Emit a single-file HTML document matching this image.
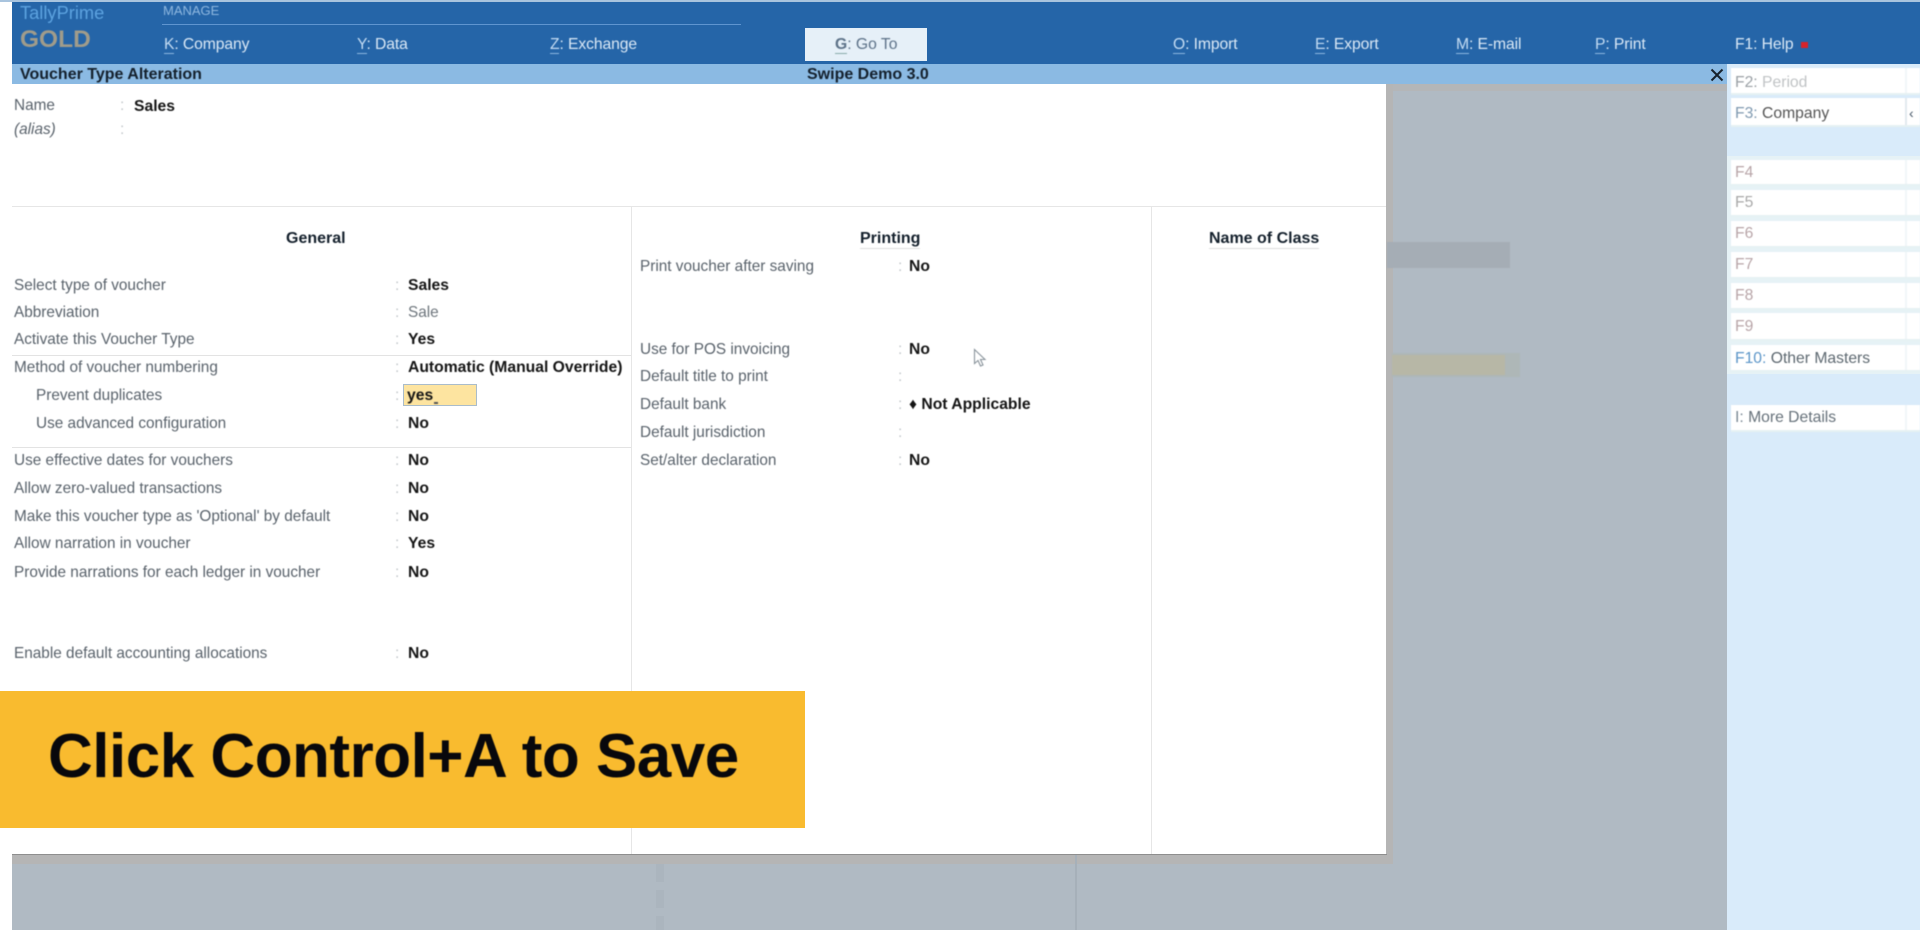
<!DOCTYPE html>
<html><head><meta charset="utf-8">
<style>
html,body{margin:0;padding:0;width:1920px;height:930px;overflow:hidden;background:#fff}
body{position:relative;font-family:"Liberation Sans",Arial,sans-serif;font-size:15.35px}
div,span.a{position:absolute;white-space:nowrap}
.t{filter:blur(.5px)}
.l{color:#59626b;line-height:18px}
.v{color:#151515;font-weight:bold;line-height:18px;font-size:15.7px}
.c{color:#c2c7ca;line-height:18px}
.m{font-weight:bold;color:#14202c;line-height:18px;font-size:16px}
.h{color:#dbe9f6;line-height:18px;font-size:15.7px;letter-spacing:-.1px}
.h u{text-decoration:none;border-bottom:1px solid #8fb8e0;color:#c4dcf3}
.s{left:1731px;width:189px;background:#fff;border-bottom:2px solid #e6f1f3;box-sizing:border-box;font-size:15.7px}
.s i{position:absolute;left:174px;top:0;bottom:0;width:2px;background:#f1f6f8}
.s span{position:absolute;left:4px;top:5px;line-height:18px;color:#8d9297}
.hr{background:#e3e3e3;height:1px}
</style></head><body>
<!-- backgrounds -->
<div style="left:12px;top:84px;width:1715px;height:846px;background:#b0bac3"></div>
<div style="left:1727px;top:64px;width:193px;height:866px;background:#d9ebfa"></div>
<div style="left:1727px;top:156px;width:193px;height:218px;background:#e6f2f6"></div>
<div style="left:0;top:0;width:1920px;height:2px;background:#a9c4de"></div>
<div style="left:12px;top:2px;width:1908px;height:62px;background:#2565a8"></div>
<div style="left:12px;top:64px;width:1715px;height:20px;background:#8bbae3"></div>
<div style="left:1386px;top:84px;width:341px;height:7px;background:#b4b6b8"></div>
<div style="left:12px;top:855px;width:1380px;height:9px;background:#b5b5b5"></div>
<div style="left:1386px;top:84px;width:7px;height:780px;background:#b5b5b5"></div>
<div class="t" style="left:1387px;top:242px;width:123px;height:26px;background:#a5adb5"></div>
<div class="t" style="left:1392px;top:353px;width:128px;height:24px;background:#aeb7b7"></div>
<div class="t" style="left:1392px;top:355px;width:113px;height:20px;background:#b7b7a6"></div>
<div style="left:656px;top:864px;width:8px;height:66px;background:repeating-linear-gradient(#abb5be 0 18px,#b0bac3 18px 26px)"></div>
<div style="left:1075px;top:855px;width:2px;height:75px;background:#a6b0b9"></div>

<!-- header -->
<div class="t" style="left:20px;top:4px;color:#5da3e0;font-size:18.3px;line-height:18px">TallyPrime</div>
<div class="t" style="left:20px;top:27px;color:#a09c8b;font-size:24.5px;font-weight:bold;line-height:26px">GOLD</div>
<div class="t" style="left:163px;top:4px;color:#8fb8e0;font-size:13px;line-height:14px">MANAGE</div>
<div style="left:162px;top:24px;width:579px;height:1px;background:#5f95d0"></div>
<div class="t h" style="left:164px;top:36px"><u>K</u>: Company</div>
<div class="t h" style="left:357px;top:36px"><u>Y</u>: Data</div>
<div class="t h" style="left:550px;top:36px"><u>Z</u>: Exchange</div>
<div style="left:805px;top:28px;width:122px;height:33px;background:#e6f0f8"></div>
<div class="t" style="left:835px;top:36px;line-height:18px;font-size:15.7px;color:#5d7288"><u style="text-decoration:none;border-bottom:1px solid #8aa;font-weight:bold">G</u>: Go To</div>
<div class="t h" style="left:1173px;top:36px"><u>O</u>: Import</div>
<div class="t h" style="left:1315px;top:36px"><u>E</u>: Export</div>
<div class="t h" style="left:1456px;top:36px"><u>M</u>: E-mail</div>
<div class="t h" style="left:1595px;top:36px"><u>P</u>: Print</div>
<div class="t h" style="left:1735px;top:36px;color:#dbe9f6">F1: Help</div>
<div class="t" style="left:1801px;top:42px;width:7px;height:6px;background:#d8232a"></div>

<!-- title -->
<div class="t m" style="left:20px;top:66px">Voucher Type Alteration</div>
<div class="t m" style="left:807px;top:66px">Swipe Demo 3.0</div>
<svg style="position:absolute;left:1710px;top:68px" width="14" height="14"><path d="M1.5 1.5L12.5 12.5M12.5 1.5L1.5 12.5" stroke="#17222c" stroke-width="2" fill="none"/></svg>

<!-- dialog -->
<div style="left:12px;top:84px;width:1374px;height:770px;background:#fff"></div>
<div style="left:12px;top:854px;width:1375px;height:1px;background:#8e8e8e"></div>
<div style="left:12px;top:206px;width:1374px;height:1px;background:#e6e6e6"></div>
<div style="left:631px;top:207px;width:1px;height:647px;background:#e6e6e6"></div>
<div style="left:1151px;top:207px;width:1px;height:647px;background:#e6e6e6"></div>
<div class="hr" style="left:12px;top:355px;width:619px"></div>
<div class="hr" style="left:12px;top:447px;width:619px"></div>

<div class="t l" style="left:14px;top:97px">Name</div><div class="t c" style="left:120px;top:97px">:</div><div class="t v" style="left:134px;top:98px">Sales</div>
<div class="t l" style="left:14px;top:121px;font-style:italic">(alias)</div><div class="t c" style="left:120px;top:121px">:</div>

<div class="t m" style="left:286px;top:230px">General</div>
<div class="t m" style="left:860px;top:230px;border-bottom:1px solid #ddd">Printing</div>
<div class="t m" style="left:1209px;top:230px;border-bottom:1px solid #ddd">Name of Class</div>

<div class="t l" style="left:14px;top:277px">Select type of voucher</div><div class="t c" style="left:395px;top:277px">:</div><div class="t v" style="left:408px;top:277px">Sales</div>
<div class="t l" style="left:14px;top:304px">Abbreviation</div><div class="t c" style="left:395px;top:304px">:</div><div class="t l" style="left:408px;top:304px;color:#6d757c">Sale</div>
<div class="t l" style="left:14px;top:331px">Activate this Voucher Type</div><div class="t c" style="left:395px;top:331px">:</div><div class="t v" style="left:408px;top:331px">Yes</div>
<div class="t l" style="left:14px;top:359px">Method of voucher numbering</div><div class="t c" style="left:395px;top:359px">:</div><div class="t v" style="left:408px;top:359px">Automatic (Manual Override)</div>
<div class="t l" style="left:36px;top:387px">Prevent duplicates</div><div class="t c" style="left:395px;top:387px">:</div>
<div style="left:403px;top:384px;width:74px;height:22px;box-sizing:border-box;background:#fde4a0;border:1px solid #a9bccb"></div>
<div class="t v" style="left:407px;top:387px">yes</div>
<div class="t" style="left:434px;top:402px;width:4px;height:2px;background:#555"></div>
<div class="t l" style="left:36px;top:415px">Use advanced configuration</div><div class="t c" style="left:395px;top:415px">:</div><div class="t v" style="left:408px;top:415px">No</div>
<div class="t l" style="left:14px;top:452px">Use effective dates for vouchers</div><div class="t c" style="left:395px;top:452px">:</div><div class="t v" style="left:408px;top:452px">No</div>
<div class="t l" style="left:14px;top:480px">Allow zero-valued transactions</div><div class="t c" style="left:395px;top:480px">:</div><div class="t v" style="left:408px;top:480px">No</div>
<div class="t l" style="left:14px;top:508px">Make this voucher type as 'Optional' by default</div><div class="t c" style="left:395px;top:508px">:</div><div class="t v" style="left:408px;top:508px">No</div>
<div class="t l" style="left:14px;top:535px">Allow narration in voucher</div><div class="t c" style="left:395px;top:535px">:</div><div class="t v" style="left:408px;top:535px">Yes</div>
<div class="t l" style="left:14px;top:564px">Provide narrations for each ledger in voucher</div><div class="t c" style="left:395px;top:564px">:</div><div class="t v" style="left:408px;top:564px">No</div>
<div class="t l" style="left:14px;top:645px">Enable default accounting allocations</div><div class="t c" style="left:395px;top:645px">:</div><div class="t v" style="left:408px;top:645px">No</div>

<div class="t l" style="left:640px;top:258px">Print voucher after saving</div><div class="t c" style="left:898px;top:258px">:</div><div class="t v" style="left:909px;top:258px">No</div>
<div class="t l" style="left:640px;top:341px">Use for POS invoicing</div><div class="t c" style="left:898px;top:341px">:</div><div class="t v" style="left:909px;top:341px">No</div>
<div class="t l" style="left:640px;top:368px">Default title to print</div><div class="t c" style="left:898px;top:368px">:</div>
<div class="t l" style="left:640px;top:396px">Default bank</div><div class="t c" style="left:898px;top:396px">:</div><div class="t v" style="left:909px;top:396px">♦ Not Applicable</div>
<div class="t l" style="left:640px;top:424px">Default jurisdiction</div><div class="t c" style="left:898px;top:424px">:</div>
<div class="t l" style="left:640px;top:452px">Set/alter declaration</div><div class="t c" style="left:898px;top:452px">:</div><div class="t v" style="left:909px;top:452px">No</div>

<svg class="t" style="position:absolute;left:973px;top:348px" width="14" height="20"><path d="M1.5 1.5V15.5L5 12.5L7.5 18L10 17L7.5 11.5H12Z" fill="#fff" stroke="#8a949c" stroke-width="1.1"/></svg>

<!-- sidebar -->
<div class="s t" style="top:68px;height:27px"><span style="top:6px"><b style="font-weight:normal;color:#9aa0a5">F2:</b> <span style="position:static;color:#c0c3c5">Period</span></span><i></i></div>
<div class="s t" style="top:98px;height:29px"><span style="top:7px"><b style="font-weight:normal;color:#7f99b0">F3:</b> <span style="position:static;color:#555">Company</span></span><i style="background:#e3e9ee"></i></div>
<div class="s t" style="top:160px;height:26px"><span style="color:#b8a5a8;top:4px">F4</span><i></i></div>
<div class="s t" style="top:190px;height:27px"><span style="color:#a8a8a8;top:4px">F5</span><i></i></div>
<div class="s t" style="top:221px;height:27px"><span style="color:#b8a5a8;top:4px">F6</span><i></i></div>
<div class="s t" style="top:252px;height:27px"><span style="color:#b8a5a8;top:4px">F7</span><i></i></div>
<div class="s t" style="top:283px;height:27px"><span style="color:#b8a5a8;top:4px">F8</span><i></i></div>
<div class="s t" style="top:313px;height:28px"><span style="color:#b8a5a8;top:5px">F9</span><i></i></div>
<div class="s t" style="top:345px;height:27px"><span><b style="font-weight:normal;color:#5b95c8">F10:</b> <span style="position:static;color:#5d6870">Other Masters</span></span><i></i></div>
<div class="s t" style="top:405px;height:27px"><span style="top:4px"><b style="font-weight:normal;color:#7c8a96">I:</b> <span style="position:static;color:#66717a">More Details</span></span><i></i></div>
<div class="t" style="left:1909px;top:104px;color:#456;font-size:14px;line-height:18px">‹</div>

<!-- banner -->
<div style="left:0;top:691px;width:805px;height:137px;background:#f9bb2f"></div>
<div class="t" style="left:48px;top:721px;color:#08080c;font-weight:bold;font-size:62px;line-height:72px;letter-spacing:-.5px">Click Control+A to Save</div>
</body></html>
